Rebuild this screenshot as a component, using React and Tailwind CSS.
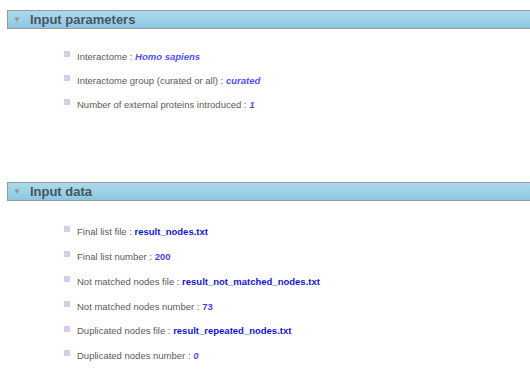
import React from "react";

const Bullet = () => (
  <span className="inline-block w-[6px] h-[6px] bg-[#dccbe8] mr-[7px] relative top-[-3px]" />
);

const SectionHeader = ({ title }) => (
  <div className="h-[19px] border-y border-l border-[#9a9a9a] bg-gradient-to-b from-[#aad9ec] via-[#9dd2e8] to-[#8ac6e0] flex items-center">
    <span className="text-[#8a969a] text-[8px] ml-[5px] mr-[9px] leading-none">&#9660;</span>
    <span className="font-bold text-[13px] text-[#4a5560] leading-none">{title}</span>
  </div>
);

const Item = ({ label, value, kind, h }) => {
  const valueClass =
    kind === "file"
      ? "font-bold text-[#1414d0]"
      : kind === "num"
      ? "font-bold text-[#4646dc]"
      : "font-bold italic text-[#5252ee]";
  return (
    <li className={"flex items-center whitespace-pre " + h}>
      <Bullet />
      <span className="text-[#5a5a5a]">{label + " : "}</span>
      <span className={valueClass}>{value}</span>
    </li>
  );
};

export default function App() {
  const params = [
    { label: "Interactome", value: "Homo sapiens" },
    { label: "Interactome group (curated or all)", value: "curated" },
    { label: "Number of external proteins introduced", value: "1" },
  ];
  const data = [
    { label: "Final list file", value: "result_nodes.txt", kind: "file" },
    { label: "Final list number", value: "200", kind: "num" },
    { label: "Not matched nodes file", value: "result_not_matched_nodes.txt", kind: "file" },
    { label: "Not matched nodes number", value: "73", kind: "num" },
    { label: "Duplicated nodes file", value: "result_repeated_nodes.txt", kind: "file" },
    { label: "Duplicated nodes number", value: "0" },
  ];

  return (
    <div className="w-[530px] h-[372px] bg-white overflow-hidden pl-[7px] pt-[10px] font-['Liberation_Sans',Arial,sans-serif] text-[9.5px]">
      <SectionHeader title="Input parameters" />
      <ul className="ml-[57px] mt-[16px]">
        {params.map((p) => (
          <Item key={p.label} {...p} h="h-[24px]" />
        ))}
      </ul>
      <div className="mt-[65px]">
        <SectionHeader title="Input data" />
      </div>
      <ul className="ml-[57px] mt-[19px]">
        {data.map((p) => (
          <Item key={p.label} {...p} h="h-[24.8px]" />
        ))}
      </ul>
    </div>
  );
}
